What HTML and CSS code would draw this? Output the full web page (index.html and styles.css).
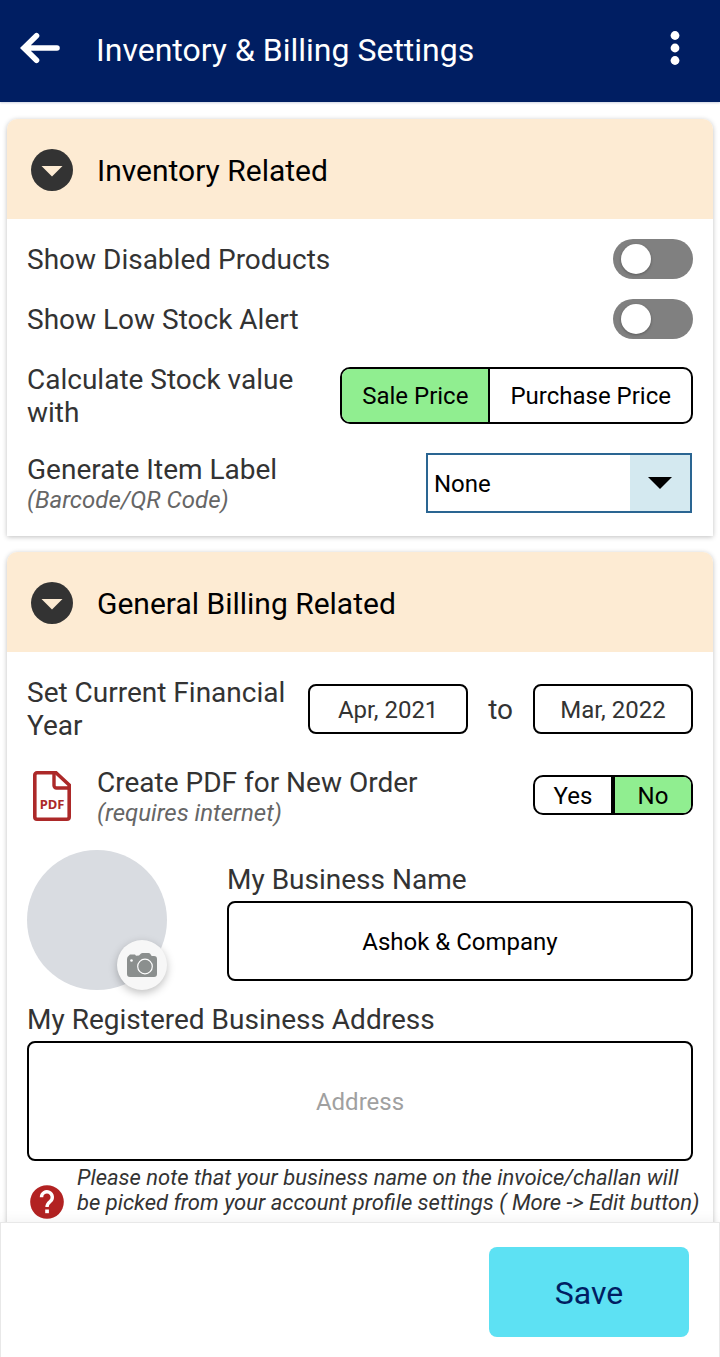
FILE: index.html
```html
<!DOCTYPE html>
<html lang="en">
<head>
    <meta charset="UTF-8">
    <meta name="viewport" content="width=device-width, initial-scale=1.0">
    <title>Inventory & Billing Settings</title>
    <link rel="stylesheet" href="styles.css">
</head>
<body>
    <header class="topbar">
        <button class="icon-btn" aria-label="Back">
            <svg width="40" height="32" viewBox="0 0 40 32">
                <path d="M16.500 3.800 4 16l12.500 12.200M4 16h33" fill="none" stroke="#fff" stroke-width="5.600" stroke-linecap="round" stroke-linejoin="miter"/>
            </svg>
        </button>
        <h1>Inventory &amp; Billing Settings</h1>
        <button class="icon-btn menu-btn" aria-label="More options">
            <svg width="10" height="36" viewBox="0 0 10 36">
                <circle cx="5" cy="5.500" r="4.400" fill="#fff"/>
                <circle cx="5" cy="18" r="4.400" fill="#fff"/>
                <circle cx="5" cy="30.500" r="4.400" fill="#fff"/>
            </svg>
        </button>
    </header>

    <main class="content">
        <section class="card">
            <button class="card-head" aria-expanded="true">
                <svg width="42" height="42" viewBox="0 0 42 42">
                    <circle cx="21" cy="21" r="21" fill="#333"/>
                    <path d="M10.500 17h21L21 27.500z" fill="#fdebd3"/>
                </svg>
                Inventory Related
            </button>
            <div class="card-body">
                <div class="row">
                    <label class="label" for="showDisabled">Show Disabled Products</label>
                    <input class="toggle" type="checkbox" id="showDisabled">
                </div>
                <div class="row">
                    <label class="label" for="lowStock">Show Low Stock Alert</label>
                    <input class="toggle" type="checkbox" id="lowStock">
                </div>
                <div class="row row-tall">
                    <span class="label" id="stockLabel">Calculate Stock value with</span>
                    <div class="segment" role="radiogroup" aria-labelledby="stockLabel">
                        <label><input type="radio" name="stock" checked><span>Sale Price</span></label>
                        <label><input type="radio" name="stock"><span>Purchase Price</span></label>
                    </div>
                </div>
                <div class="row row-tall">
                    <label class="label" for="itemLabel">Generate Item Label <small>(Barcode/QR Code)</small></label>
                    <div class="select-box">
                        <select id="itemLabel">
                            <option>None</option>
                            <option>Barcode</option>
                            <option>QR Code</option>
                        </select>
                        <span class="select-arrow">
                            <svg width="24" height="12" viewBox="0 0 24 12"><path d="M0 0h24L12 12z"/></svg>
                        </span>
                    </div>
                </div>
            </div>
        </section>

        <section class="card">
            <button class="card-head" aria-expanded="true">
                <svg width="42" height="42" viewBox="0 0 42 42">
                    <circle cx="21" cy="21" r="21" fill="#333"/>
                    <path d="M10.500 17h21L21 27.500z" fill="#fdebd3"/>
                </svg>
                General Billing Related
            </button>
            <div class="card-body">
                <div class="row row-tall">
                    <span class="label">Set Current Financial Year</span>
                    <div class="dates">
                        <button class="date-btn">Apr, 2021</button>
                        <span>to</span>
                        <button class="date-btn">Mar, 2022</button>
                    </div>
                </div>

                <div class="row row-tall">
                    <svg class="pdf-icon" width="38" height="50" viewBox="0 0 38 50">
                        <path d="M4 1.800H23L36.200 14V46a2.200 2.200 0 0 1-2.200 2.200H4A2.200 2.200 0 0 1 1.800 46V4A2.200 2.200 0 0 1 4 1.800z" fill="none" stroke="#ac2929" stroke-width="3.600"/>
                        <path d="M21 2v12.500a2.500 2.500 0 0 0 2.500 2.500H36" fill="none" stroke="#ac2929" stroke-width="3.400"/>
                        <text class="pdf-text" x="19" y="37.500" text-anchor="middle">PDF</text>
                    </svg>
                    <span class="label" id="pdfLabel">Create PDF for New Order <small>(requires internet)</small></span>
                    <div class="segment yes-no" role="radiogroup" aria-labelledby="pdfLabel">
                        <label><input type="radio" name="pdf"><span>Yes</span></label>
                        <label><input type="radio" name="pdf" checked><span>No</span></label>
                    </div>
                </div>

                <div class="business">
                    <div class="avatar">
                        <button class="camera" aria-label="Change photo">
                            <svg width="30" height="24" viewBox="0 0 30 24">
                                <path d="M2 2.500 3 1.500h5l1 1.200 3-.2L14 .5q.500-.5 1.500-.5h6q1 0 1.500.6l1.700 2.400H27a3 3 0 0 1 3 3V21a3 3 0 0 1-3 3H3a3 3 0 0 1-3-3V6q0-2.500 2-3.500z" fill="#8b8f8e"/>
                                <circle cx="18" cy="13.500" r="7.300" fill="none" stroke="#fff" stroke-width="1.200"/>
                                <circle cx="4.500" cy="7.500" r="1.300" fill="#fff"/>
                            </svg>
                        </button>
                    </div>
                    <div class="field">
                        <label class="label" for="businessName">My Business Name</label>
                        <input class="text-box" type="text" id="businessName" value="Ashok &amp; Company">
                    </div>
                </div>

                <div class="field">
                    <label class="label" for="address">My Registered Business Address</label>
                    <textarea class="text-box" id="address" placeholder="Address"></textarea>
                </div>

                <div class="note">
                    <svg width="40" height="34" viewBox="0 0 40 34">
                        <circle cx="20" cy="17" r="16.800" fill="#b22222"/>
                        <path d="M14.500 12.200a5.400 5.400 0 1 1 8.900 4.100c-2.300 1.900-3.400 2.700-3.400 5.700" fill="none" stroke="#fff" stroke-width="3.400"/>
                        <rect x="18.200" y="24.500" width="3.700" height="3.700" fill="#fff"/>
                    </svg>
                    <p>Please note that your business name on the invoice/challan will be picked from your account profile settings ( More -&gt; Edit button)</p>
                </div>
            </div>
        </section>
    </main>

    <footer class="footer">
        <button class="save-btn">Save</button>
    </footer>
</body>
</html>
```
FILE: styles.css
```css
* {
    box-sizing: border-box;
}
body {
    margin: 0;
    height: 100vh;
    display: flex;
    flex-direction: column;
    background: #fff;
    color: #333;
    font-family: Roboto, "Liberation Sans", sans-serif;
    font-size: 24px;
}
button, input, select, textarea {
    font: inherit;
    color: inherit;
    margin: 0;
}
button {
    border: none;
    background: none;
    padding: 0;
    cursor: pointer;
}
svg {
    display: block;
    flex-shrink: 0;
}

/* top bar */
.topbar {
    display: flex;
    align-items: center;
    height: 102px;
    padding: 0 40px 6px 20px;
    flex-shrink: 0;
    background: #001e62;
    color: #fff;
    box-shadow: 0 1px 2px rgba(0, 30, 98, 0.2);
}
.topbar h1 {
    flex: 1;
    margin: 0;
    padding: 4px 0 0 36px;
    font-size: 32px;
    font-weight: 400;
    line-height: 40px;
}

.content {
    flex: 1;
    min-height: 0;
    padding: 17px 7px;
    overflow-y: auto;
    scrollbar-width: none;
}

/* cards */
.card {
    margin-bottom: 16px;
    background: #fff;
    border-radius: 10px 10px 0 0;
    box-shadow: 0 1px 5px rgba(0, 0, 0, 0.25);
}
.card-head {
    display: flex;
    align-items: center;
    gap: 24px;
    width: 100%;
    height: 100px;
    padding: 2px 24px 0;
    background: #fdebd3;
    border-radius: 10px 10px 0 0;
    color: #000;
    font-size: 30px;
    text-align: left;
}
.card-body {
    padding: 20px 20px 23px;
}
.row {
    display: flex;
    align-items: center;
    justify-content: space-between;
    min-height: 40px;
    margin-bottom: 20px;
}
.row-tall {
    min-height: 60px;
    margin: 24px 0;
}
.row-tall:first-child {
    margin-top: 4px;
}
.row-tall:last-child {
    margin-bottom: 0;
}
.label {
    flex: 1;
    font-size: 28px;
    line-height: 33px;
}
.label small {
    display: block;
    margin-bottom: -2px;
    font-size: 24px;
    line-height: 29px;
    font-style: italic;
    color: #666;
}

/* on/off switch */
.toggle {
    appearance: none;
    display: flex;
    align-items: center;
    width: 80px;
    height: 40px;
    padding: 0 8px;
    background: #808080;
    border-radius: 20px;
    cursor: pointer;
}
.toggle::before {
    content: "";
    width: 30px;
    height: 30px;
    border-radius: 50%;
    background: #fff;
    box-shadow: 0 1px 3px rgba(0, 0, 0, 0.3);
}
.toggle:checked {
    justify-content: flex-end;
    background: #4caf50;
}

/* segmented buttons */
.segment {
    display: flex;
    height: 57px;
    margin-bottom: 2px;
    border: 2px solid #000;
    border-radius: 10px;
    overflow: hidden;
    color: #000;
}
.segment label {
    display: flex;
    cursor: pointer;
}
.segment label + label {
    border-left: 2px solid #000;
}
.segment input {
    appearance: none;
    width: 0;
}
.segment span {
    flex: 1;
    display: flex;
    align-items: center;
    justify-content: center;
    padding: 2px 20px 0;
}
.segment input:checked + span {
    background: #90ee90;
}
.yes-no {
    width: 160px;
    height: 40px;
}
.yes-no label {
    flex: 1;
}
.yes-no label + label {
    border-left-width: 4px;
}
.yes-no span {
    padding: 2px 0 0;
}

/* dropdown */
.select-box {
    position: relative;
    width: 266px;
    margin-right: 1px;
}
.select-box select {
    appearance: none;
    display: block;
    width: 100%;
    height: 60px;
    padding: 2px 66px 0 6px;
    border: 2px solid #2a6592;
    border-radius: 0;
    background: #fff;
    color: #000;
}
.select-arrow {
    position: absolute;
    top: 2px;
    right: 2px;
    bottom: 2px;
    width: 60px;
    display: flex;
    align-items: center;
    justify-content: center;
    background: #d4e9f0;
    pointer-events: none;
}

.dates {
    display: flex;
    align-items: center;
    gap: 20px;
    font-size: 28px;
}
.date-btn {
    width: 160px;
    height: 50px;
    padding-top: 2px;
    border: 2px solid #000;
    border-radius: 8px;
    font-size: 24px;
}

.pdf-icon {
    margin: 0 26px 0 6px;
}
.pdf-text {
    font: bold 13px "Noto Sans", sans-serif;
    fill: #ac2929;
}

/* business profile */
.business {
    display: flex;
    gap: 60px;
}
.avatar {
    position: relative;
    flex-shrink: 0;
    width: 140px;
    height: 140px;
    border-radius: 50%;
    background: #d9dce1;
}
.camera {
    position: absolute;
    right: 0;
    bottom: 0;
    display: flex;
    align-items: center;
    justify-content: center;
    width: 50px;
    height: 50px;
    border-radius: 50%;
    background: #f7f7f7;
    box-shadow: 0 3px 8px rgba(0, 0, 0, 0.25);
}
.field {
    flex: 1;
    display: flex;
    flex-direction: column;
    padding-top: 13px;
}
.field .label {
    flex: none;
    margin-bottom: 5px;
}
.text-box {
    width: 100%;
    height: 80px;
    padding: 2px 10px 0;
    border: 2px solid #000;
    border-radius: 8px;
    background: #fff;
    color: #000;
    text-align: center;
}
.text-box::placeholder {
    color: #a0a0a0;
}
textarea.text-box {
    height: 120px;
    padding-top: 45px;
    line-height: 28px;
    resize: none;
}
.note {
    display: flex;
    align-items: flex-start;
    gap: 10px;
    margin: 4px -10px 0 0;
}
.note svg {
    margin-top: 20px;
}
.note p {
    margin: 0;
    font-size: 22px;
    line-height: 25px;
    font-style: italic;
}

/* bottom bar */
.footer {
    display: flex;
    justify-content: flex-end;
    flex-shrink: 0;
    padding: 24px 30px 20px;
    background: #fff;
    border: 1px solid #e8e8e8;
    border-bottom: none;
    box-shadow: 0 -2px 12px rgba(0, 0, 0, 0.05);
    z-index: 1;
}
.save-btn {
    width: 200px;
    height: 90px;
    padding-top: 2px;
    border-radius: 8px;
    background: #5de1f3;
    color: #001e62;
    font-size: 32px;
}
```
